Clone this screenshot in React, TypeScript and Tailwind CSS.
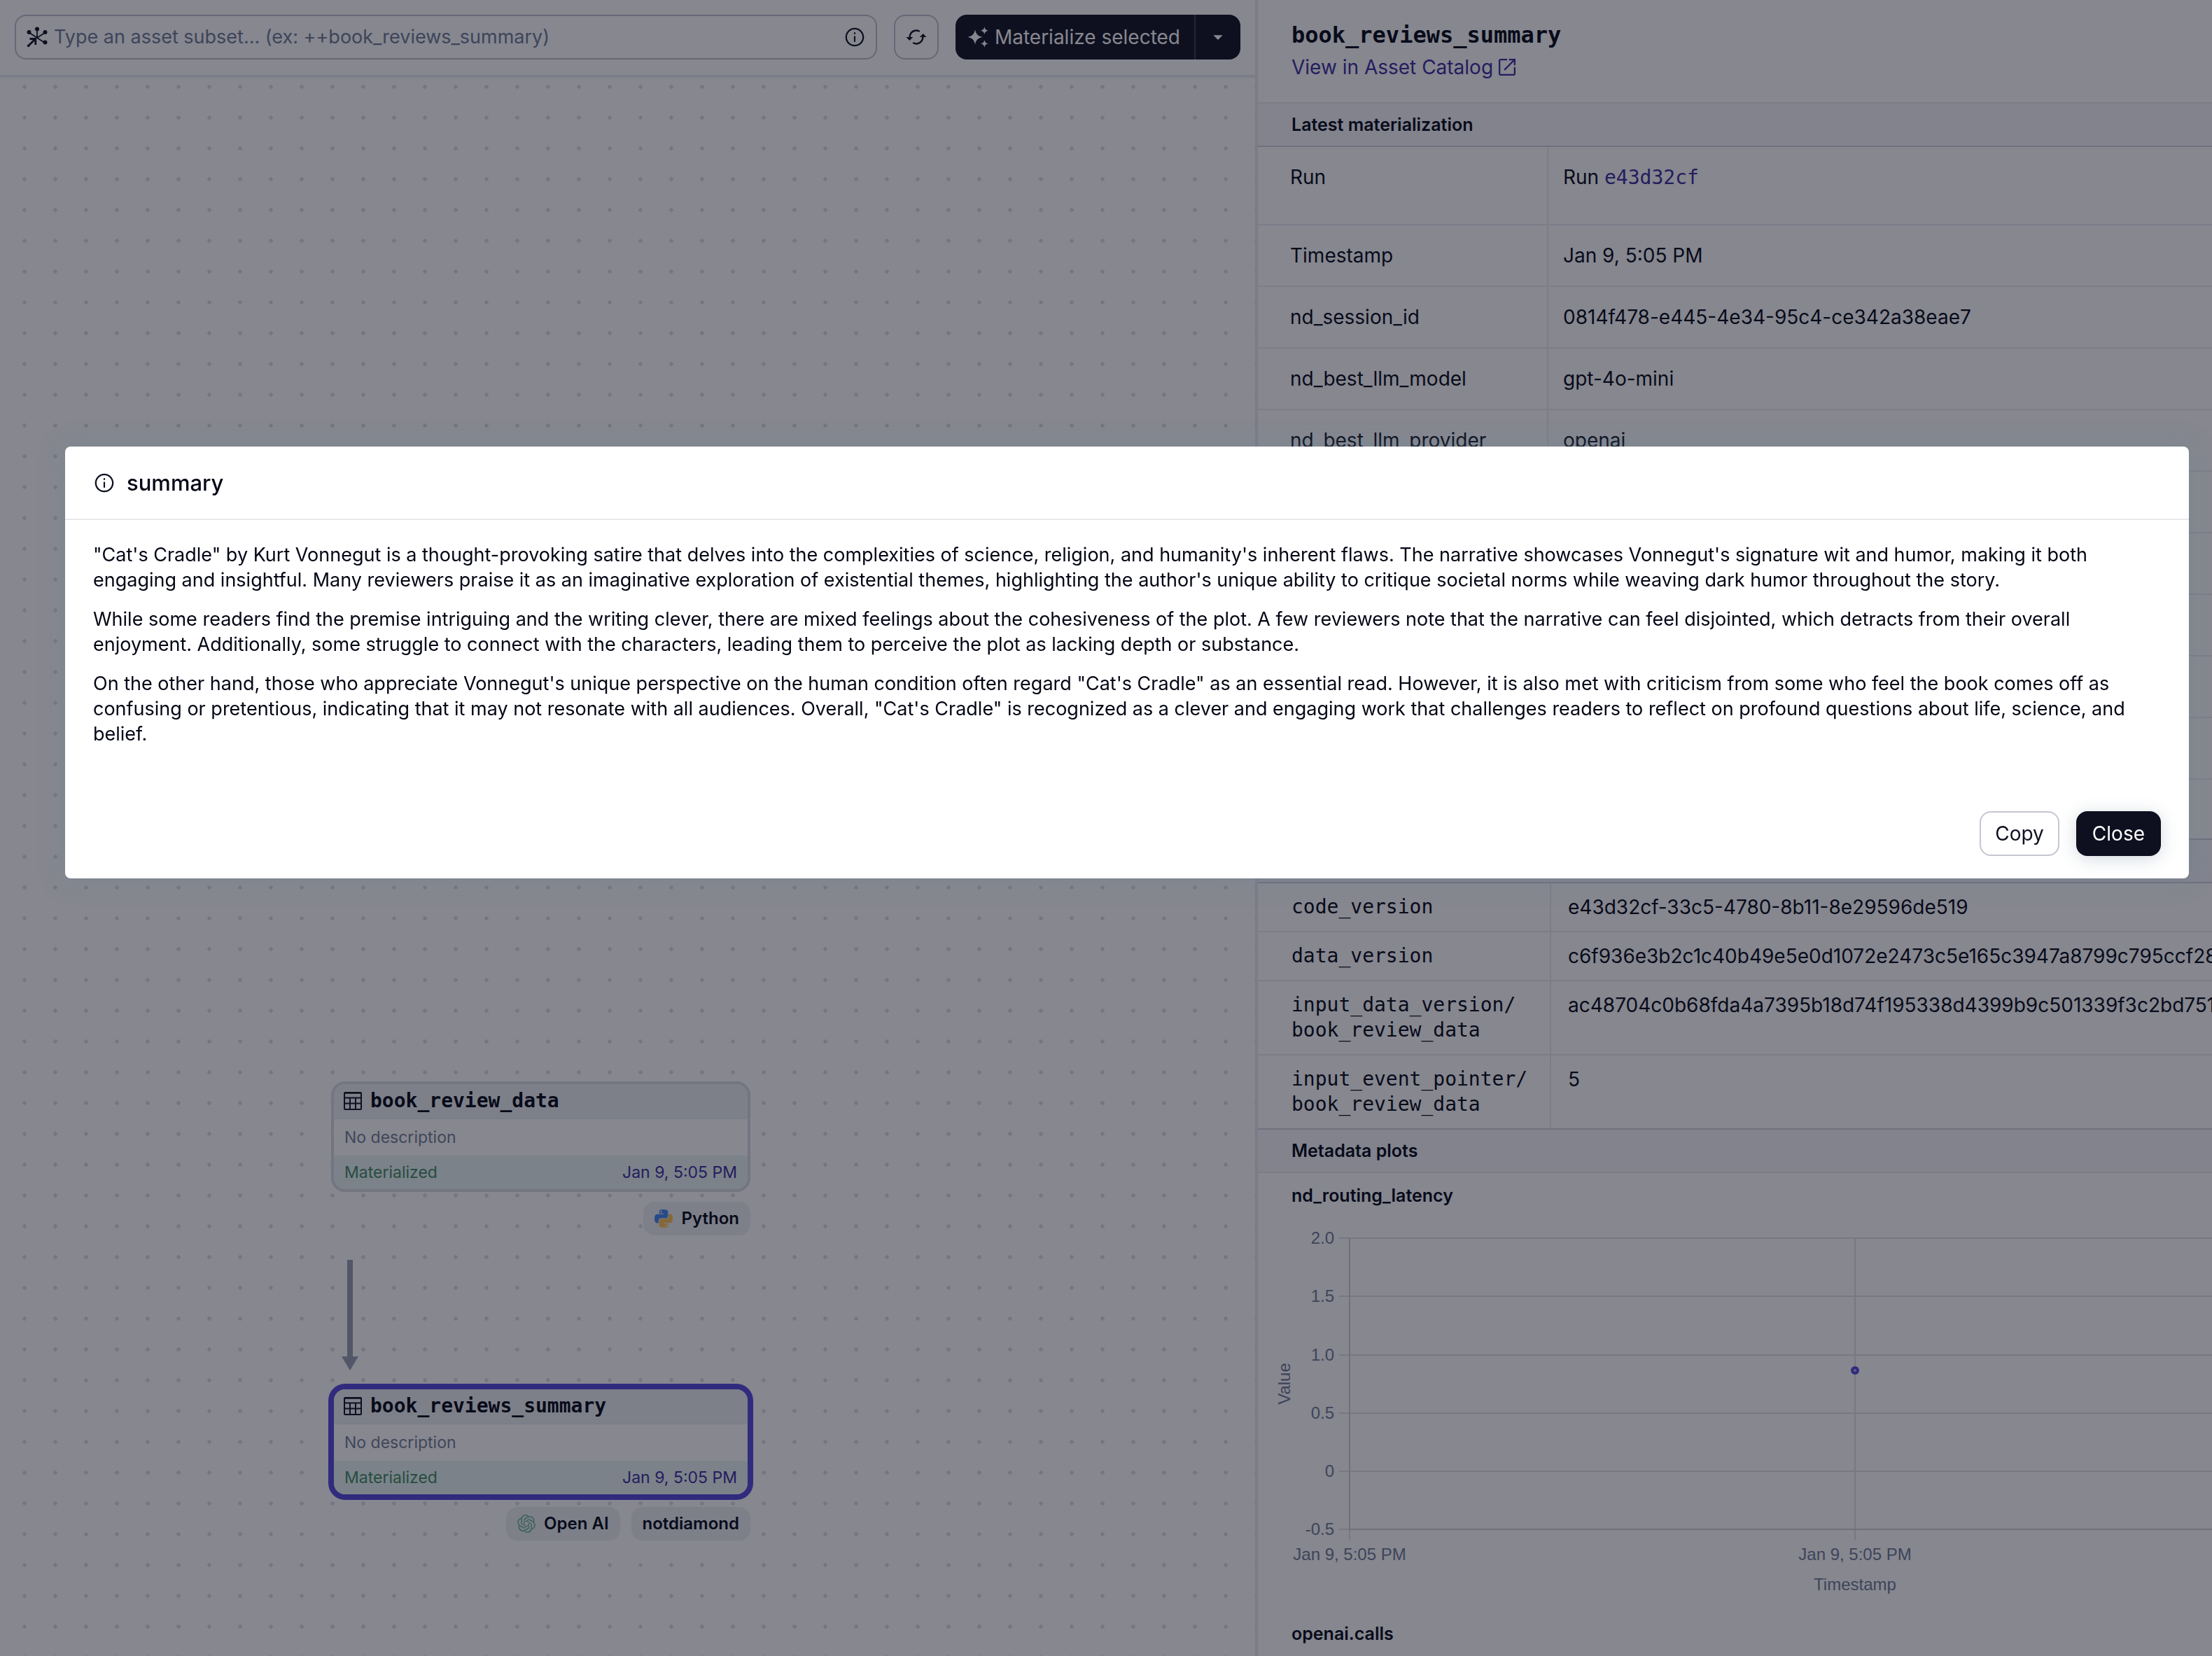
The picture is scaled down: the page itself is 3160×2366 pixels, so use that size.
import React from 'react';
import { SiOpenai } from 'react-icons/si';

const MONO = "font-['DejaVu_Sans_Mono',monospace]";

type IconProps = { className?: string };

function Icon({ d, className = '' }: IconProps & { d: string }) {
  return (
    <svg viewBox="0 0 24 24" fill="currentColor" aria-hidden="true" className={`size-8 shrink-0 ${className}`}>
      <path d={d} />
    </svg>
  );
}

const INFO =
  'M11.2 7h1.6v1.8h-1.6zM11.2 10.8h1.6V17h-1.6zM12 2C6.48 2 2 6.48 2 12s4.48 10 10 10 10-4.48 10-10S17.52 2 12 2zm0 18.3c-4.58 0-8.3-3.72-8.3-8.3S7.42 3.7 12 3.7s8.3 3.72 8.3 8.3-3.72 8.3-8.3 8.3z';
const CACHED =
  'M19.3 8.3l-3.7 3.7h2.5c0 3.4-2.7 6.2-6.1 6.2-.9 0-1.8-.2-2.6-.6-1.1-.4-1.9 1-.8 1.6 1 .5 2.2.8 3.4.8 4.4 0 7.9-3.5 7.9-8H22.9zM5.9 12c0-3.4 2.7-6.2 6.1-6.2.9 0 1.8.2 2.6.6 1.1.4 1.9-1 .8-1.6-1-.5-2.2-.8-3.4-.8-4.4 0-7.9 3.5-7.9 8H1.1l3.7 3.7L8.5 12H5.9z';
const SPARKLES =
  'M19 9c.5-2.5 1.5-3.5 4-4-2.5-.5-3.5-1.5-4-4-.5 2.5-1.500 3.500-4 4 2.500.5 3.500 1.500 4 4zM9 4c-1 5-3 7-8 8 5 1 7 3 8 8 1-5 3-7 8-8-5-1-7-3-8-8zM19 15c-.5 2.500-1.500 3.500-4 4 2.500.5 3.500 1.500 4 4 .5-2.500 1.500-3.500 4-4-2.500-.5-3.500-1.500-4-4z';
const DROP = 'M7 10l5 5 5-5z';
const EXTERNAL =
  'M19.3 19.3H4.7V4.7H12V3H5c-1.11 0-2 .9-2 2v14c0 1.1.89 2 2 2h14c1.1 0 2-.9 2-2v-7h-1.7v7.3zM14 3v1.7h4.1l-9.6 9.6 1.2 1.2 9.6-9.6V10H21V3h-7z';

function SubsetIcon() {
  return (
    <svg viewBox="0 0 32 32" aria-hidden="true" className="size-8 shrink-0 text-[#0e1020]" fill="none" stroke="currentColor">
      <path d="M16 5.5V17M4.5 9.5L27.5 24.5M27.5 9.5L16 17" strokeWidth="1.8" />
      <path d="M3.2 28.8L12.6 19.4M5.5 18.5H13.8V27" strokeWidth="2.8" />
      <g fill="currentColor" stroke="none">
        <circle cx="16" cy="4.5" r="3" />
        <circle cx="4.5" cy="9" r="3" />
        <circle cx="27.5" cy="9" r="3" />
        <circle cx="27.5" cy="23.5" r="3" />
        <circle cx="3.6" cy="28.4" r="1.8" />
      </g>
    </svg>
  );
}

function TableIcon() {
  return (
    <svg viewBox="0 0 26 26" aria-hidden="true" className="size-[26px] shrink-0 text-[#0e1020]" fill="none" stroke="currentColor" strokeWidth="2">
      <rect x="1" y="1" width="24" height="24" rx="1" />
      <path d="M1 8.5H25M1 16.5H25M9 8.5V25M17 8.5V25" />
      <path d="M1 1.8H25" />
    </svg>
  );
}

const SNAKE =
  'M14.25.18l.9.2.73.26.59.3.45.32.34.34.25.34.16.33.1.3.04.26.02.2-.01.13V8.5l-.05.63-.13.55-.21.46-.26.38-.3.31-.33.25-.35.19-.35.14-.33.1-.3.07-.26.04-.21.02H8.77l-.69.05-.59.14-.5.22-.41.27-.33.32-.27.35-.2.36-.15.37-.1.35-.07.32-.04.27-.02.21v3.06H3.17l-.21-.03-.28-.07-.32-.12-.35-.18-.36-.26-.36-.36-.35-.46-.32-.59-.28-.73-.21-.88-.14-1.05-.05-1.23.06-1.22.16-1.04.24-.87.32-.71.36-.57.4-.44.42-.33.42-.24.4-.16.36-.1.32-.05.24-.01h.16l.06.01h8.16v-.83H6.18l-.01-2.75-.02-.37.05-.34.11-.31.17-.28.25-.26.31-.23.38-.2.44-.18.51-.15.58-.12.64-.1.71-.06.77-.04.84-.02 1.27.05zm-6.3 1.98l-.23.33-.08.41.08.41.23.34.33.22.41.09.41-.09.33-.22.23-.34.08-.41-.08-.41-.23-.33-.33-.22-.41-.09-.41.09z';

function PythonIcon() {
  return (
    <svg viewBox="0 0 24 24" aria-hidden="true" className="size-[26px] shrink-0">
      <path d={SNAKE} fill="#4584f0" />
      <path d={SNAKE} fill="#fdc04f" transform="rotate(180 12 12)" />
    </svg>
  );
}

function Toolbar() {
  return (
    <div className="flex items-center gap-6 border-b-4 border-[#e9ecf0] px-[21px] pt-[21px] pb-[22px]">
      <label className="flex h-16 min-w-0 flex-1 items-center gap-2 rounded-2xl border-2 border-[#c0c0cd] px-[14px]">
        <SubsetIcon />
        <input
          type="text"
          aria-label="Asset subset"
          placeholder="Type an asset subset… (ex: ++book_reviews_summary)"
          className="min-w-0 flex-1 bg-transparent text-[27px] leading-9 outline-none placeholder:text-[#6e7994] placeholder:opacity-100"
        />
        <Icon d={INFO} className="text-[#0e1020]" />
      </label>
      <button type="button" aria-label="Refresh" className="flex size-16 items-center justify-center rounded-2xl border-2 border-[#c0c0cd] text-[#0e1020]">
        <Icon d={CACHED} />
      </button>
      <div className="flex h-16 overflow-hidden rounded-2xl bg-[#0e1020] text-white">
        <button type="button" className="flex items-center gap-2 pr-5 pl-4 text-[28px] leading-9">
          <Icon d={SPARKLES} />
          Materialize selected
        </button>
        <button type="button" aria-label="More materialize options" className="flex w-[66px] items-center justify-center border-l-2 border-[#3b3d4b]">
          <Icon d={DROP} />
        </button>
      </div>
    </div>
  );
}

function AssetNode({ name, selected = false, children }: { name: string; selected?: boolean; children: React.ReactNode }) {
  return (
    <div className="flex w-[599px] flex-col gap-3.5">
      <article
        className={`overflow-hidden rounded-[20px] border-4 bg-white ${
          selected ? 'border-[#5446dc] ring-4 ring-[#5446dc]' : 'border-[#d8dae3]'
        }`}
      >
        <header className="flex h-[50px] items-center gap-3 border-b-2 border-[#e6edf0] bg-[#edf0f3] px-[14px]">
          <TableIcon />
          <h2 className={`${MONO} text-[28px] leading-9 font-bold text-[#030615]`}>{name}</h2>
        </header>
        <p className="h-[52px] px-[15px] text-[23px] leading-[52px] text-[#747c93]">No description</p>
        <footer className="flex h-12 items-center justify-between bg-[#e8f5f2] px-[15px] text-[23px]">
          <span className="text-[#3e8b63]">Materialized</span>
          <a href="#run" className="text-[#3a2b9c]">Jan 9, 5:05 PM</a>
        </footer>
      </article>
      <div className="flex justify-end gap-4">{children}</div>
    </div>
  );
}

function Tag({ icon, label }: { icon?: React.ReactNode; label: string }) {
  return (
    <span className="flex h-12 items-center gap-3 rounded-2xl bg-[#edf0f3] px-4 text-[24px] leading-8 font-semibold text-[#030615]">
      {icon}
      {label}
    </span>
  );
}

function Canvas() {
  return (
    <div className="relative flex-1 overflow-hidden bg-[radial-gradient(circle,#dcdce0_2.5px,transparent_3px)] bg-[size:44px_44px] bg-[position:13px_-9px]">
      <div className="absolute top-[1434px] left-[473px]">
        <AssetNode name="book_review_data">
          <Tag icon={<PythonIcon />} label="Python" />
        </AssetNode>
      </div>
      <svg aria-hidden="true" viewBox="0 0 24 158" className="absolute top-[1689px] left-[488px] h-[158px] w-6" fill="#969fb0">
        <path d="M8 0h8v138h8L12 158L0 138h8z" />
      </svg>
      <div className="absolute top-[1870px] left-[473px]">
        <AssetNode name="book_reviews_summary" selected>
          <Tag icon={<SiOpenai className="size-[26px] text-[#74b89c]" />} label="Open AI" />
          <Tag label="notdiamond" />
        </AssetNode>
      </div>
    </div>
  );
}

function SectionTitle({ children, className }: { children?: React.ReactNode; className: string }) {
  return (
    <h3 className={`h-16 bg-[#f6f6fa] pl-12 text-[25px] leading-[60px] font-semibold ${className}`}>{children}</h3>
  );
}

const METADATA: { key: string; value: React.ReactNode; size: string }[] = [
  {
    key: 'Run',
    value: (
      <>
        Run <a href="#run" className={`${MONO} text-[#3a2b9c]`}>e43d32cf</a>
      </>
    ),
    size: 'h-28',
  },
  { key: 'Timestamp', value: 'Jan 9, 5:05 PM', size: 'h-22' },
  { key: 'nd_session_id', value: '0814f478-e445-4e34-95c4-ce342a38eae7', size: 'h-22' },
  { key: 'nd_best_llm_model', value: 'gpt-4o-mini', size: 'h-22' },
  { key: 'nd_best_llm_provider', value: 'openai', size: 'h-22' },
  { key: '', value: '', size: 'h-22' },
  { key: '', value: '', size: 'h-22' },
  { key: '', value: '', size: 'h-22' },
  { key: '', value: '', size: 'h-22' },
  { key: '', value: '', size: 'h-22' },
  { key: '', value: '', size: 'h-[84px]' },
];

const VERSIONS: [string[], string][] = [
  [['code_version'], 'e43d32cf-33c5-4780-8b11-8e29596de519'],
  [['data_version'], 'c6f936e3b2c1c40b49e5e0d1072e2473c5e165c3947a8799c795ccf28'],
  [['input_data_version/', 'book_review_data'], 'ac48704c0b68fda4a7395b18d74f195338d4399b9c501339f3c2bd751'],
  [['input_event_pointer/', 'book_review_data'], '5'],
];

const Y_TICKS: [string, number][] = [
  ['2.0', 43],
  ['1.5', 126],
  ['1.0', 210],
  ['0.5', 293],
  ['0', 376],
  ['-0.5', 459],
];

function LatencyChart() {
  return (
    <svg
      role="img"
      aria-label="nd_routing_latency over time"
      width="1600"
      height="590"
      className="block max-w-none font-['Liberation_Sans',sans-serif] text-[24px]"
      fill="#6e7994"
    >
      <g stroke="#e0e0e6" strokeWidth="2">
        {Y_TICKS.map(([label, y]) => (
          <path key={label} d={`M116 ${y}H1575`} />
        ))}
        <path d="M853 43V475M131 459V475" />
      </g>
      <path d="M131 43V459H1575" fill="none" stroke="#d0d0d8" strokeWidth="2" />
      {Y_TICKS.map(([label, y]) => (
        <text key={label} x="109" y={y + 8} textAnchor="end">
          {label}
        </text>
      ))}
      <text x="131" y="503" textAnchor="middle">Jan 9, 5:05 PM</text>
      <text x="853" y="503" textAnchor="middle">Jan 9, 5:05 PM</text>
      <text x="853" y="546" textAnchor="middle">Timestamp</text>
      <text x="46" y="251" textAnchor="middle" transform="rotate(-90 46 251)">Value</text>
      <circle cx="853" cy="232" r="4" fill="#b4aef0" stroke="#5446dc" strokeWidth="4" />
    </svg>
  );
}

function Sidebar() {
  return (
    <aside className="min-w-0 overflow-hidden border-l-4 border-[#e9e9ef]">
      <header className="pt-8 pb-8 pl-12">
        <h1 className={`${MONO} text-[32px] leading-9 font-bold`}>book_reviews_summary</h1>
        <a href="#catalog" className="mt-2.5 flex items-center gap-1 text-[28px] leading-9 text-[#3a2b9c]">
          View in Asset Catalog
          <Icon d={EXTERNAL} />
        </a>
      </header>
      <SectionTitle className="border-t-2 border-b-2 border-t-[#e9e9ee] border-b-[#d0d0d9]">Latest materialization</SectionTitle>
      <table className="w-full table-fixed border-separate border-spacing-0 text-left text-[28px] leading-9">
        <tbody>
          {METADATA.map(({ key, value, size }, i) => {
            const line = i < METADATA.length - 1 ? 'border-b-2 border-[#ebebf0]' : 'border-[#ebebf0]';
            return (
              <tr key={i} className={size}>
                <th scope="row" className={`w-[415px] border-r-2 pt-[25px] pl-[46px] align-top font-normal ${line}`}>
                  {key}
                </th>
                <td className={`pt-[25px] pl-[21px] align-top whitespace-nowrap ${line}`}>{value}</td>
              </tr>
            );
          })}
        </tbody>
      </table>
      <SectionTitle className="border-y-2 border-[#d0d0d9]" />
      <table className="w-full table-fixed border-separate border-spacing-0 text-left text-[28px] leading-9">
        <tbody>
          {VERSIONS.map(([lines, value], i) => {
            const line = i < VERSIONS.length - 1 ? 'border-b-2 border-[#ebebf0]' : 'border-[#ebebf0]';
            return (
              <tr key={i}>
                <th scope="row" className={`${MONO} w-[419px] border-r-2 py-4 pl-12 align-top font-normal ${line}`}>
                  {lines.map((l) => (
                    <span key={l} className="block">{l}</span>
                  ))}
                </th>
                <td className={`py-4 pl-6 align-top whitespace-nowrap ${line}`}>{value}</td>
              </tr>
            );
          })}
        </tbody>
      </table>
      <SectionTitle className="border-t-2 border-b-2 border-t-[#d0d0d9] border-b-[#e9e9ee]">Metadata plots</SectionTitle>
      <h4 className="mt-3.5 pl-12 text-[25px] leading-9 font-semibold">nd_routing_latency</h4>
      <LatencyChart />
      <h4 className="pl-12 text-[25px] leading-9 font-semibold">openai.calls</h4>
    </aside>
  );
}

const PARAGRAPHS = [
  `"Cat's Cradle" by Kurt Vonnegut is a thought-provoking satire that delves into the complexities of science, religion, and humanity's inherent flaws. The narrative showcases Vonnegut's signature wit and humor, making it both engaging and insightful. Many reviewers praise it as an imaginative exploration of existential themes, highlighting the author's unique ability to critique societal norms while weaving dark humor throughout the story.`,
  `While some readers find the premise intriguing and the writing clever, there are mixed feelings about the cohesiveness of the plot. A few reviewers note that the narrative can feel disjointed, which detracts from their overall enjoyment. Additionally, some struggle to connect with the characters, leading them to perceive the plot as lacking depth or substance.`,
  `On the other hand, those who appreciate Vonnegut's unique perspective on the human condition often regard "Cat's Cradle" as an essential read. However, it is also met with criticism from some who feel the book comes off as confusing or pretentious, indicating that it may not resonate with all audiences. Overall, "Cat's Cradle" is recognized as a clever and engaging work that challenges readers to reflect on profound questions about life, science, and belief.`,
];

function SummaryDialog() {
  return (
    <div className="fixed inset-0 bg-[#0e0f1f]/50 pt-[638px] pr-[33px] pl-[93px]">
      <div
        role="dialog"
        aria-modal="true"
        aria-labelledby="dialog-title"
        className="rounded-lg bg-white shadow-[0_0_32px_4px_rgba(110,135,150,0.35)]"
      >
        <header className="flex items-center gap-4 border-b-2 border-[#e8e8ed] px-10 pt-8 pb-[31px]">
          <Icon d={INFO} className="text-[#0e1020]" />
          <h2 id="dialog-title" className="text-[31px] leading-10 font-medium">summary</h2>
        </header>
        <div className="flex flex-col gap-5 px-10 pt-8 pb-[92px] text-[27px] leading-9">
          {PARAGRAPHS.map((p) => (
            <p key={p.slice(0, 16)}>{p}</p>
          ))}
        </div>
        <footer className="flex justify-end gap-6 px-10 pb-8 text-[28px] leading-9">
          <button type="button" className="h-16 rounded-2xl border-2 border-[#c4c6d1] px-5 text-[#0e1020]">
            Copy
          </button>
          <button type="button" className="h-16 rounded-2xl bg-[#0e1020] px-[23px] text-white shadow-[0_4px_24px_rgba(60,80,110,0.22)]">
            Close
          </button>
        </footer>
      </div>
    </div>
  );
}

export default function App() {
  return (
    <div className="grid h-screen grid-cols-[1793fr_1367fr] grid-rows-1 overflow-hidden bg-white font-[Inter,sans-serif] text-[#030615]">
      <main className="flex min-w-0 flex-col">
        <Toolbar />
        <Canvas />
      </main>
      <Sidebar />
      <SummaryDialog />
    </div>
  );
}
